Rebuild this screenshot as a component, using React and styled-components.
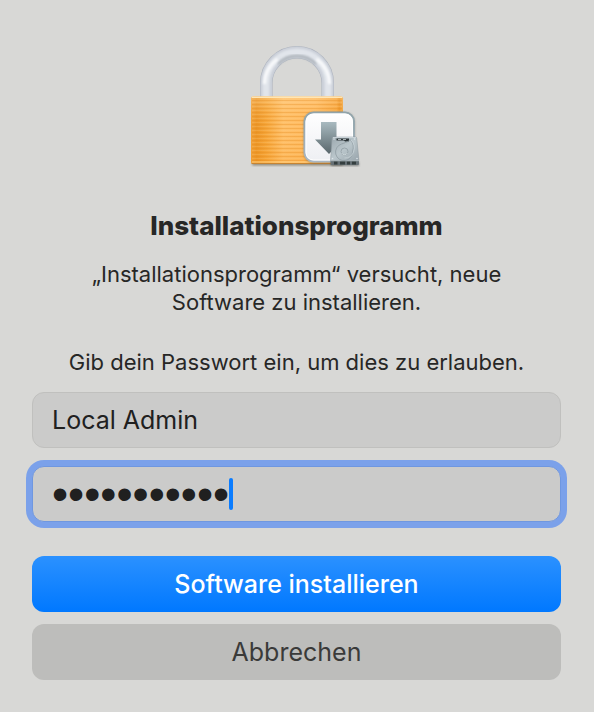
import React, { useState } from "react";
import styled, { createGlobalStyle, css } from "styled-components";

const App = () => {

    const [user, setUser] = useState("Local Admin");

    const [password, setPassword] = useState("passwort123");

    return (
        <>
            <GlobalStyle />
            <Dialog onSubmit={(e) => { e.preventDefault(); }}>
                <LockIcon />
                <Title>Installationsprogramm</Title>
                <Message>„Installationsprogramm“ versucht, neue Software zu installieren.</Message>
                <Message>Gib dein Passwort ein, um dies zu erlauben.</Message>
                <Fields>
                    <Field>
                        <UserInput aria-label="Benutzername" value={user} onChange={(e) => { setUser(e.target.value) }} />
                    </Field>
                    <Field $focused>
                        <PasswordInput type="password" aria-label="Passwort" value={password} onChange={(e) => { setPassword(e.target.value) }} />
                        <Caret />
                    </Field>
                </Fields>
                <Buttons>
                    <Button type="submit" $primary>Software installieren</Button>
                    <Button type="button">Abbrechen</Button>
                </Buttons>
            </Dialog>
        </>
    )
}

const LockIcon = () => (
    <Icon viewBox="233 40 128 128" aria-hidden="true">
        <defs>
            <linearGradient id="body" x1="0" x2="1" y1="0" y2="0">
                <stop offset="0" stopColor="#f0a23c" />
                <stop offset="0.06" stopColor="#eb9526" />
                <stop offset="0.16" stopColor="#f5a437" />
                <stop offset="0.35" stopColor="#ffc06a" />
                <stop offset="0.7" stopColor="#ffb95e" />
                <stop offset="0.93" stopColor="#f7a237" />
                <stop offset="0.96" stopColor="#ea8c18" />
                <stop offset="1" stopColor="#f0a440" />
            </linearGradient>
            <linearGradient id="bodyShade" x1="0" x2="0" y1="0" y2="1">
                <stop offset="0" stopColor="#ffe0b0" stopOpacity="0.35" />
                <stop offset="0.45" stopColor="#ffb040" stopOpacity="0" />
                <stop offset="1" stopColor="#f09018" stopOpacity="0.2" />
            </linearGradient>
            <pattern id="lines" width="8" height="4" patternUnits="userSpaceOnUse">
                <rect width="8" height="1" fill="#e58a1c" opacity="0.32" />
                <rect y="2" width="8" height="1" fill="#ffd798" opacity="0.2" />
            </pattern>
            <linearGradient id="badge" x1="0" x2="0" y1="0" y2="1">
                <stop offset="0" stopColor="#ffffff" />
                <stop offset="1" stopColor="#eeeff3" />
            </linearGradient>
            <linearGradient id="badgeEdge" x1="0" x2="0" y1="0" y2="1">
                <stop offset="0" stopColor="#91a4aa" />
                <stop offset="1" stopColor="#a9b6c2" />
            </linearGradient>
            <linearGradient id="arrow" x1="0" x2="0" y1="0" y2="1">
                <stop offset="0" stopColor="#a9bac0" />
                <stop offset="1" stopColor="#59666b" />
            </linearGradient>
            <linearGradient id="drive" x1="0" x2="1" y1="0" y2="1">
                <stop offset="0" stopColor="#9ba8ae" />
                <stop offset="0.5" stopColor="#bac6cb" />
                <stop offset="1" stopColor="#98a4ab" />
            </linearGradient>
            <filter id="soft" x="-20%" y="-20%" width="140%" height="140%">
                <feGaussianBlur stdDeviation="1" />
            </filter>
        </defs>

        {/* shackle */}
        <g fill="none">
            <path d="M266.3 98V83a30.7 30.7 0 0 1 61.4 0v15" stroke="#adb3be" strokeWidth="12.5" />
            <path d="M266.3 98V83a30.7 30.7 0 0 1 61.4 0v15" stroke="#c9ced7" strokeWidth="11.5" />
            <path d="M266 98V83a31 31 0 0 1 62 0v15" stroke="#e1e5eb" strokeWidth="7" filter="url(#soft)" />
            <path d="M278 64a26.5 26.5 0 0 1 38 0" stroke="#b3b9c0" strokeWidth="3" filter="url(#soft)" />
            <path d="M264.5 84a32.5 32.5 0 0 1 13-25M316.5 59a32.5 32.5 0 0 1 13 25" stroke="#f9fafc" strokeWidth="3" filter="url(#soft)" />
        </g>

        {/* body */}
        <rect x="252" y="162" width="91" height="3.5" rx="1.5" fill="#4f4020" opacity="0.5" filter="url(#soft)" />
        <rect x="251" y="96.5" width="92" height="67.5" rx="2" fill="url(#body)" />
        <rect x="251" y="96.5" width="92" height="67.5" rx="2" fill="url(#bodyShade)" />
        <rect x="252" y="99" width="90" height="62" fill="url(#lines)" />
        <rect x="251.5" y="96.5" width="91" height="1.5" rx="0.7" fill="#ffe6b4" />
        <rect x="252" y="161.5" width="90" height="1" fill="#ffd184" />
        <rect x="251.5" y="163" width="91" height="1" rx="0.5" fill="#c88430" />

        {/* package badge */}
        <rect x="303.5" y="112" width="51.5" height="51.5" rx="10" fill="#5d584a" opacity="0.35" filter="url(#soft)" />
        <rect x="304.5" y="112.5" width="49.5" height="49" rx="9" fill="url(#badge)" stroke="url(#badgeEdge)" strokeWidth="2" />
        <rect x="306" y="114" width="46.5" height="46" rx="7.5" fill="none" stroke="#fff" strokeWidth="1" />
        <path d="M321 122h15.5v17.5h6.5L329 154l-14-14.5h6z" fill="url(#arrow)" />

        {/* hard drive */}
        <path d="M331 162h28v4h-28z" fill="#303536" opacity="0.5" filter="url(#soft)" />
        <path d="M333 137h22.5q1 0 1.2 1L359 160.5H330.5L332 138q0-1 1-1z" fill="url(#drive)" stroke="#8b979d" strokeWidth="0.5" />
        <path d="M333 137.5h23" stroke="#d2dbdf" strokeWidth="0.8" />
        <path d="M330.5 160.5H359V164q0 1-1 1h-26.5q-1 0-1-1z" fill="#667075" />
        <path d="M334 161.5h3.5v3H334zM340 161.5h5v3h-5zM347 161.5h3v3h-3zM352 161.5h4v3h-4z" fill="#353e3f" />
        <path d="M330.5 160.7H359" stroke="#bbc7cb" strokeWidth="0.8" />
        <path d="M336.5 138.5h12.5v3h-4l-1-1h-7.500z" fill="#2c3538" />
        <path d="M338 139.5h3M343 139.5h3" stroke="#c7d0d3" strokeWidth="0.8" />
        <g fill="none" strokeWidth="0.8">
            <path d="M350 139.5q5 5 2.5 12a8.5 8.5 0 1 1-11-7.5l4-1.5q4-1 4.5-3z" stroke="#909da3" />
            <path d="M351 140q5 5 2.5 12a8.5 8.5 0 0 1-9 6" stroke="#d3dde0" strokeWidth="0.6" />
            <circle cx="344.5" cy="151.5" r="3.5" stroke="#909da3" />
            <path d="M341.5 153a3.5 3.5 0 0 0 6 0" stroke="#d5dfe2" />
        </g>
        <g fill="#dbe4e8">
            <circle cx="334" cy="139" r="0.8" />
            <circle cx="354.5" cy="139" r="0.8" />
            <circle cx="332.5" cy="158.5" r="0.8" />
            <circle cx="357" cy="158.5" r="0.8" />
        </g>
    </Icon>
)

const GlobalStyle = createGlobalStyle`
    *{
        box-sizing:border-box;
    }
    body{
        margin:0;
        background-color:#d8d8d6;
        font-family:Inter, "Liberation Sans", sans-serif;
        color:#272726;
    }
`

const Dialog = styled.form`
    display:flex;
    flex-direction:column;
    align-items:center;
    padding:40px 33px 32px 32px;
`

const Icon = styled.svg`
    width:128px;
    height:128px;
`

const Title = styled.h1`
    margin:40px 0 16px;
    font-size:26px;
    line-height:36px;
    font-weight:800;
`

const Message = styled.p`
    max-width:460px;
    margin:0 0 32px;
    font-size:22px;
    line-height:28px;
    text-align:center;
`

const Fields = styled.div`
    align-self:stretch;
    display:flex;
    flex-direction:column;
    gap:18px;
    margin-top:-16px;
`

const Field = styled.div`
    display:flex;
    align-items:center;
    height:56px;
    padding:0 19px;
    border:1px solid #c0c0be;
    border-radius:12px;
    background-color:#cbcbca;
    ${({ $focused }) => $focused && css`
        border-color:#6f97e0;
        box-shadow:0 0 0 6px #7ba1ea;
    `}
`

const UserInput = styled.input`
    flex:1;
    min-width:0;
    padding:0;
    border:none;
    outline:none;
    background:none;
    color:#202020;
    font-family:inherit;
    font-size:25px;
    line-height:32px;
`

/* bigger font so the dots come out large */
const PasswordInput = styled(UserInput)`
    flex:none;
    field-sizing:content;
    max-width:100%;
    height:54px;
    font-family:"Liberation Sans", sans-serif;
    font-size:46px;
`

const Caret = styled.span`
    width:4px;
    height:32px;
    border-radius:2px;
    background-color:#0a7cff;
`

const Buttons = styled.div`
    align-self:stretch;
    display:flex;
    flex-direction:column;
    gap:12px;
    margin-top:34px;
`

const Button = styled.button`
    height:56px;
    padding:0 20px;
    border:none;
    border-radius:12px;
    background-color:#bdbdbb;
    color:#3a3a39;
    font-family:inherit;
    font-size:25px;
    line-height:32px;
    cursor:pointer;
    ${({ $primary }) => $primary && css`
        background:linear-gradient(#2b91ff, #0078ff);
        color:#fff;
        font-weight:500;
    `}
`

export default App;
